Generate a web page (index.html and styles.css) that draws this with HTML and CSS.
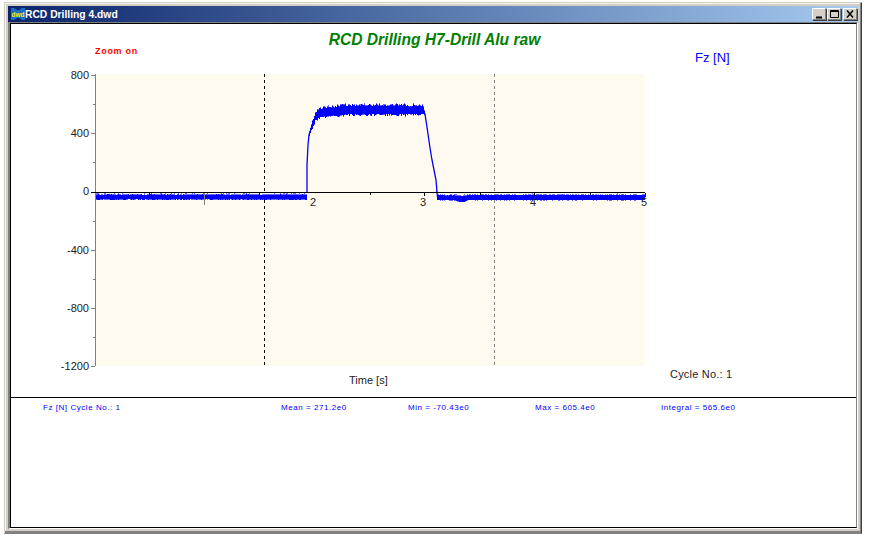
FILE: index.html
```html
<!DOCTYPE html>
<html lang="en">
<head>
    <meta charset="UTF-8">
    <title>RCD Drilling 4.dwd</title>
    <link rel="stylesheet" href="styles.css">
    <script src="chart.js" defer></script>
</head>
<body>
    <div class="window">
        <div class="title-bar">
            <svg class="app-icon" viewBox="0 0 14 14" width="14" height="14">
                <path d="M0 1h3l3 2h2l3-2h3v12h-3l-3-2H6l-3 2H0z" fill="#1a6fc4"/>
                <text x="7" y="9.500" class="icon-text">dwd</text>
            </svg>
            <span class="title-text">RCD Drilling 4.dwd</span>
            <div class="title-buttons">
                <div class="title-btn">
                    <svg viewBox="0 0 12 10" width="12" height="10"><path d="M3 7.500h6v2H3z"/></svg>
                </div>
                <div class="title-btn btn-max">
                    <svg viewBox="0 0 12 10" width="12" height="10"><path d="M2.500 1.500h8v7h-8z M2.500 2.500h8" fill="none" stroke="#000"/></svg>
                </div>
                <div class="title-btn btn-close">
                    <svg viewBox="0 0 12 10" width="12" height="10"><path d="M3 1.500l6 7M9 1.500l-6 7" fill="none" stroke="#000" stroke-width="1.500"/></svg>
                </div>
            </div>
        </div>
        <div class="client">
            <div class="client-inner">
                <svg class="chart" viewBox="11 24 844 373" width="844" height="373">
                    <text x="434.500" y="45" class="chart-title">RCD Drilling H7-Drill Alu raw</text>
                    <text x="95" y="54" class="zoom-label">Zoom on</text>
                    <text x="695" y="62" class="channel-label">Fz [N]</text>

                    <rect x="96" y="74" width="549" height="292" class="plot-bg"/>

                    <g class="axis-gray">
                        <path d="M95.500 74v292"/>
                        <path d="M91 75h4M91 133.500h4M91 250.500h4M91 308.500h4M91 366h4"/>
                        <path d="M93 104h2M93 162h2M93 221h2M93 279h2M93 337h2"/>
                    </g>

                    <g class="y-labels">
                        <text x="89" y="79">800</text>
                        <text x="89" y="137">400</text>
                        <text x="89" y="195">0</text>
                        <text x="89" y="254">-400</text>
                        <text x="89" y="312">-800</text>
                        <text x="89" y="370">-1200</text>
                    </g>

                    <path class="cursor-black" d="M264.500 74v292"/>
                    <path class="cursor-gray" d="M494.500 74v292"/>

                    <g id="signal"></g>

                    <path class="axis-black" d="M91 192.500h554"/>
                    <path class="axis-ticks" d="M149.500 193v2M259.500 193v2M370.500 193v2M480.500 193v2M590.500 193v2M424.500 193v3M534.500 193v3M645.500 193v4"/>
                    <path class="axis-gray" d="M204.500 193v12"/>

                    <g class="x-labels">
                        <text x="313" y="206">2</text>
                        <text x="423" y="206">3</text>
                        <text x="533" y="206">4</text>
                        <text x="644" y="206">5</text>
                    </g>

                    <text x="349" y="384" class="axis-name">Time [s]</text>
                    <text x="670" y="378" class="axis-name cycle-label">Cycle No.: 1</text>
                </svg>
                <div class="stats">
                    <span>Fz [N] Cycle No.: 1</span>
                    <span>Mean = 271.2e0</span>
                    <span>Min = -70.43e0</span>
                    <span>Max = 605.4e0</span>
                    <span>Integral = 565.6e0</span>
                </div>
            </div>
        </div>
    </div>
</body>
</html>
```

FILE: styles.css
```css
html, body {
    margin: 0;
    padding: 0;
    background: #ffffff;
}

body {
    font-family: "Liberation Sans", Arial, sans-serif;
}

.window {
    box-sizing: border-box;
    width: 858px;
    height: 532px;
    margin: 2px 0 0 4px;
    padding: 3px;
    background: #d4d0c8;
    border: 1px solid #d4d0c8;
    border-right-color: #404040;
    border-bottom-color: #808080;
    box-shadow: inset -1px -2px 0 #808080, inset 1px 1px 0 #f4f2ec;
}

.title-bar {
    display: flex;
    align-items: center;
    height: 16px;
    background: linear-gradient(to right, #0a246a, #a6caf0);
}

.app-icon {
    flex: none;
    margin: 0 0 0 3px;
}

.icon-text {
    font-family: "Liberation Sans", sans-serif;
    font-size: 6.500px;
    font-weight: bold;
    fill: #ffee00;
    text-anchor: middle;
}

.title-text {
    font-size: 10.300px;
    font-weight: bold;
    color: #ffffff;
}

.title-buttons {
    display: flex;
    margin-left: auto;
    margin-right: 1px;
}

.title-btn {
    box-sizing: border-box;
    width: 14px;
    height: 12px;
    background: #d4d0c8;
    border: 1px solid #808080;
    border-top-color: #ffffff;
    border-left-color: #ffffff;
    box-shadow: 1px 1px 0 #404040;
    display: flex;
    overflow: hidden;
}

.btn-max {
    margin-left: 1px;
}

.btn-close {
    margin-left: 2px;
}

.client {
    box-sizing: border-box;
    height: 507px;
    border-top: 1px solid #808080;
    border-left: 2px solid #808080;
    border-right: 1px solid #ffffff;
    border-bottom: 1px solid #ffffff;
}

.client-inner {
    box-sizing: border-box;
    height: 100%;
    background: #ffffff;
    border-top: 1px solid #000000;
    border-left: 1px solid #000000;
    border-right: 1px solid #808080;
    border-bottom: 1px solid #000000;
}

.chart {
    display: block;
}

.chart-title {
    font-size: 15.600px;
    font-weight: bold;
    font-style: italic;
    fill: #008000;
    text-anchor: middle;
}

.zoom-label {
    font-size: 9px;
    font-weight: bold;
    letter-spacing: 0.7px;
    fill: #ff0000;
}

.channel-label {
    font-size: 13px;
    fill: #0000ff;
}

.plot-bg {
    fill: #fffaf0;
}

.axis-gray {
    stroke: #808080;
    fill: none;
    shape-rendering: crispEdges;
}

.axis-black,
.axis-ticks {
    stroke: #000000;
    fill: none;
    shape-rendering: crispEdges;
}

.cursor-black {
    stroke: #000000;
    stroke-dasharray: 3 3;
    fill: none;
    shape-rendering: crispEdges;
}

.cursor-gray {
    stroke: #808080;
    stroke-dasharray: 3 3;
    fill: none;
    shape-rendering: crispEdges;
}

.y-labels text {
    font-size: 11px;
    fill: #222222;
    text-anchor: end;
}

.x-labels text {
    font-size: 11px;
    fill: #222222;
    text-anchor: middle;
}

.axis-name {
    font-size: 11px;
    fill: #222222;
}

.cycle-label {
    letter-spacing: 0.2px;
}

.signal-band {
    stroke: #0000ff;
    stroke-width: 1;
    fill: none;
    shape-rendering: crispEdges;
}

.signal-soft {
    stroke: #6a6aff;
    stroke-width: 1;
    fill: none;
    shape-rendering: crispEdges;
}

.signal-line {
    stroke: #0000ff;
    stroke-width: 1.300;
    fill: none;
}

.stats {
    display: grid;
    grid-template-columns: 238px 127px 127px 126px 1fr;
    padding: 5px 0 0 32px;
    border-top: 1px solid #000000;
    font-size: 8px;
    letter-spacing: 0.55px;
    line-height: 10px;
    color: #0000ff;
}
```

FILE: chart.js
```js
// Envelope of the force trace: x pixel, centre y, half height of the noise
const envelope = [
    [96, 197, 2.6], [306.5, 197, 2.6], [307, 165, 0.3], [308, 145, 1],
    [309, 135, 2.5], [312, 126, 4], [316, 116, 5], [320, 113, 6], [345, 110, 6],
    [400, 110, 6], [423, 110, 5.5], [425, 114, 2], [428, 134, 1], [430, 148, 1],
    [432, 160, 1], [434, 170, 1], [436, 180, 1], [436.5, 191, 0.3], [437, 197.5, 2.6],
    [455, 198, 2.6], [463, 199, 3.2], [468, 197.5, 2.6], [645, 197.5, 2.6]
];

// Small seeded generator so the noise is the same on every load
let seed = 41;
function rand() {
    seed = (seed * 16807) % 2147483647;
    return seed / 2147483647;
}

function sample(x) {
    for (let i = 1; i < envelope.length; i++) {
        const a = envelope[i - 1];
        const b = envelope[i];
        if (x <= b[0]) {
            const t = (x - a[0]) / (b[0] - a[0]);
            return [a[1] + (b[1] - a[1]) * t, a[2] + (b[2] - a[2]) * t];
        }
    }
    return [envelope[envelope.length - 1][1], envelope[envelope.length - 1][2]];
}

function buildTrace() {
    let solid = '';
    let soft = '';
    for (let x = 96.5; x <= 645; x += 1) {
        const [y, amp] = sample(x);
        // The baseline is a nearly solid band, the plateau is spikier
        const floor = y > 190 ? 0.85 : 0.6;
        const up = y - amp * (floor + rand() * (1 - floor));
        const down = y + amp * (floor + rand() * (1 - floor));
        solid += `M${x} ${up.toFixed(1)}V${down.toFixed(1)}`;
        const spike = rand() * 1.5;
        soft += `M${x} ${(up - spike).toFixed(1)}V${(down + spike * 0.5).toFixed(1)}`;
    }

    // Rising and falling flanks are drawn as one thin line through the centres
    const rise = '307,192 307,165 308,145 309,135 312,126 316,116';
    const fall = '423,110 425,114 428,134 430,148 432,160 434,170 436,180 437,192 437.5,197';

    const group = document.getElementById('signal');
    group.innerHTML = `<path class="signal-soft" d="${soft}"/><path class="signal-band" d="${solid}"/>`
        + `<polyline class="signal-line" points="${rise}"/><polyline class="signal-line" points="${fall}"/>`;
}

document.addEventListener('DOMContentLoaded', buildTrace);
```
